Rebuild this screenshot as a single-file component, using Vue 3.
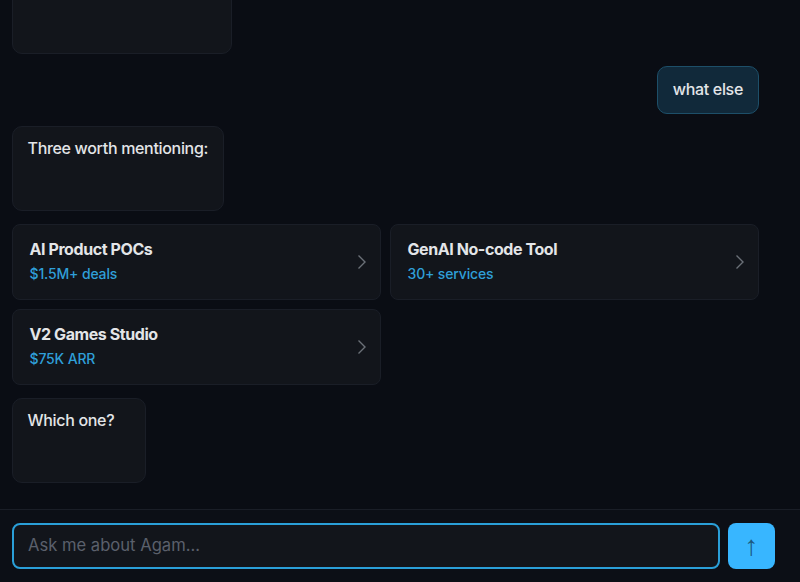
<script setup>
const cards = [
  { title: 'AI Product POCs', sub: '$1.5M+ deals' },
  { title: 'GenAI No-code Tool', sub: '30+ services' },
  { title: 'V2 Games Studio', sub: '$75K ARR' }
]
</script>

<template>
  <div class="chat">
    <div class="messages">
      <div class="bubble bot clipped"></div>
      <div class="bubble user">what else</div>
      <div class="bubble bot">Three worth mentioning:</div>
      <div class="cards">
        <div v-for="card in cards" :key="card.title" class="card">
          <div class="card-text">
            <span class="card-title">{{ card.title }}</span>
            <span class="card-sub">{{ card.sub }}</span>
          </div>
          <svg class="chevron" width="20" height="20" viewBox="0 0 20 20" fill="none">
            <path d="M6.5 3.5L13 10L6.5 16.5" stroke="#6b7078" stroke-width="1.4" />
          </svg>
        </div>
      </div>
      <div class="bubble bot short">Which one?</div>
    </div>
    <form class="composer" @submit.prevent>
      <input class="ask" type="text" placeholder="Ask me about Agam..." />
      <button class="send" type="submit">↑</button>
    </form>
  </div>
</template>

<style scoped>
.chat {
  display: flex;
  flex-direction: column;
  height: 100vh;
  background: #0a0d14;
  font-family: Inter, "Liberation Sans", sans-serif;
  overflow: hidden;
}

.messages {
  flex: 1;
  min-height: 0;
  display: flex;
  flex-direction: column;
  justify-content: flex-end;
  gap: 12px;
  padding: 0 41px 26px 12px;
  overflow: hidden;
}

.bubble {
  flex-shrink: 0;
  box-sizing: border-box;
  font-size: 16px;
  line-height: 24px;
  font-weight: 500;
  letter-spacing: -0.32px;
  color: #e3e5e8;
  border-radius: 10px;
}

.bot {
  align-self: flex-start;
  padding: 9px 14.5px 50px;
  background: #12151b;
  border: 1px solid #1a1e27;
}

.clipped {
  width: 220px;
  height: 120px;
}

.short {
  width: 134px;
}

.user {
  align-self: flex-end;
  padding: 10px 15px 12px;
  background: #11293a;
  border: 1px solid #1d4f69;
}

.cards {
  display: grid;
  grid-template-columns: 369px 369px;
  gap: 9px;
  flex-shrink: 0;
  margin: 1px 0;
}

.card {
  box-sizing: border-box;
  height: 76px;
  display: flex;
  align-items: center;
  justify-content: space-between;
  padding: 0 8px 2px 16.5px;
  background: #12151b;
  border: 1px solid #1a1e27;
  border-radius: 8px;
}

.chevron {
  margin-top: 2px;
}

.card-text {
  display: flex;
  flex-direction: column;
  gap: 4px;
}

.card-title {
  font-size: 16px;
  line-height: 22px;
  font-weight: 700;
  letter-spacing: -0.42px;
  color: #e3e5e8;
}

.card-sub {
  font-size: 14px;
  line-height: 20px;
  font-weight: 500;
  letter-spacing: -0.15px;
  color: #2f9fd8;
}

.composer {
  display: flex;
  gap: 8px;
  padding: 13px 25px 13px 12px;
  background: #0c0f16;
  border-top: 1px solid #1a1e27;
}

.ask {
  flex: 1;
  min-width: 0;
  box-sizing: border-box;
  height: 46px;
  padding: 0 14px 2px;
  font-family: inherit;
  font-size: 16.6px;
  color: #e3e5e8;
  background: #12151b;
  border: 2px solid #2a9fd8;
  border-radius: 8px;
  outline: none;
}

.ask::placeholder {
  color: #5b606c;
}

.send {
  width: 47px;
  height: 46px;
  padding: 0;
  font-family: "Liberation Sans", sans-serif;
  font-size: 28px;
  color: #1c5a80;
  background: #38b6ff;
  border: none;
  border-radius: 8px;
}
</style>
